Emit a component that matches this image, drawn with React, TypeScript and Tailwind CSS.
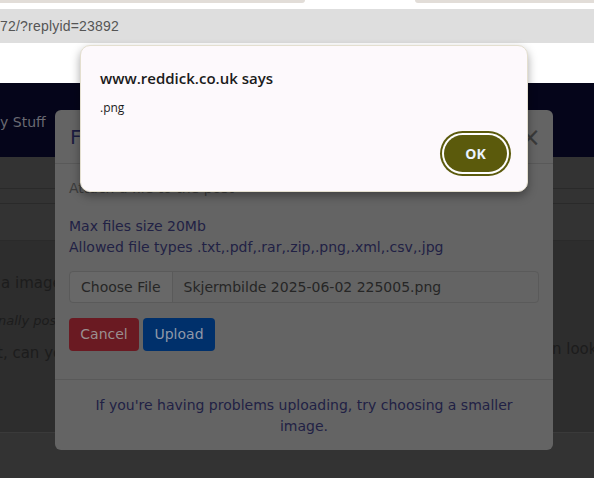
import React from "react";

export default function App() {
  return (
    <div className="relative w-[594px] h-[478px] overflow-hidden bg-white flex flex-col" style={{ fontFamily: '"DejaVu Sans", Verdana, sans-serif' }}>
      {/* tab strip */}
      <div className="h-[3px] flex shrink-0">
        <div className="w-[305px] bg-[#e2ddd8] rounded-br-[4px]" />
        <div className="w-[110px] bg-white" />
        <div className="flex-1 bg-[#e2ddd8] rounded-bl-[4px]" />
      </div>
      <div className="h-[6px] bg-white shrink-0" />
      {/* address bar */}
      <div className="h-[34px] bg-[#dedede] shrink-0 flex items-center text-[14px] text-[#555555]" style={{ fontFamily: '"Liberation Sans", Arial, sans-serif' }}>
        <span className="tracking-[0.2px]">72/?replyid=23892</span>
      </div>
      <div className="h-[40px] bg-white shrink-0" />
      {/* page (dimmed) */}
      <div className="relative flex-1 bg-[#323232] flex flex-col">
        <div className="h-[74px] bg-[#05051a] shrink-0 flex items-center overflow-hidden">
          <div className="w-[55px] overflow-hidden whitespace-nowrap pt-[3px]">
            <span className="-ml-[12px] text-[14px] text-[#6a6a72] inline-block">My Stuff</span>
          </div>
        </div>
        <div className="h-[32px] bg-[#333333] border-b border-[#2a2a2a] shrink-0" />
        <div className="h-[15px] bg-[#333333] border-b border-[#2a2a2a] shrink-0" />
        <div className="h-[37px] bg-[#333333] border-b border-[#2a2a2a] shrink-0" />
        <div className="h-[192px] bg-[#2d2d2d] border-b border-[#3a3a3a] shrink-0 flex text-[#1c1c1c] whitespace-nowrap">
          <div className="w-[55px] overflow-hidden flex flex-col">
            <div className="pt-[31px] text-[15px] pl-[1px]">a image here</div>
            <div className="pt-[16px] text-[13px] italic">
              <span className="inline-block -ml-[2px]">nally posted</span>
            </div>
            <div className="pt-[12px] text-[15px]">
              <span className="inline-block -ml-[3px]">t, can you</span>
            </div>
          </div>
          <div className="w-[498px]" />
          <div className="flex-1 overflow-hidden flex flex-col">
            <div className="pt-[97px] text-[15px]">
              <span className="inline-block -ml-[1px]">n look</span>
            </div>
          </div>
        </div>
        <div className="flex-1 bg-[#333333]" />

        {/* bootstrap modal (dimmed) */}
        <div className="absolute left-[55px] top-[27px] w-[498px] rounded-[6px] bg-[#646464] flex flex-col">
          <div className="h-[54px] border-b border-[#595959] flex items-center justify-between pl-[15px] pr-[12px]">
            <span className="text-[20px] text-[#1c1c40]">File Upload</span>
            <span className="text-[26px] text-[#3a3a3a] leading-none">×</span>
          </div>
          <div className="px-[14px] pt-[14px] pb-[28px] flex flex-col text-[14px] leading-[21px] text-[#212144]">
            <div className="text-[14px] text-[#3c3c3c]">Attach a file to the post</div>
            <div className="mt-[17px]">Max files size 20Mb</div>
            <div>Allowed file types .txt,.pdf,.rar,.zip,.png,.xml,.csv,.jpg</div>
            <div className="mt-[13px] h-[32px] border border-[#5a5a5a] rounded-[4px] flex items-center text-[#262626]">
              <div className="h-full flex items-center px-[11px] bg-[#686868] border-r border-[#5a5a5a] rounded-l-[4px]">Choose File</div>
              <div className="pl-[11px]">Skjermbilde 2025-06-02 225005.png</div>
            </div>
            <div className="mt-[15px] flex gap-[4px]">
              <button className="h-[33px] w-[70px] rounded-[4px] bg-[#6a1a22] text-[#9a8f90] text-[14px]">Cancel</button>
              <button className="h-[33px] w-[72px] rounded-[4px] bg-[#00306b] text-[#8f98a8] text-[14px]">Upload</button>
            </div>
          </div>
          <div className="border-t border-[#595959] px-[20px] pt-[15px] pb-[13px] text-center text-[14px] leading-[21px] text-[#212144]">
            If you're having problems uploading, try choosing a smaller image.
          </div>
        </div>
      </div>

      {/* chrome alert */}
      <div className="absolute left-[80px] top-[45px] w-[448px] h-[147px] bg-[#fdf9fc] border border-[#e4dfcf] rounded-[10px] shadow-[0_4px_10px_rgba(0,0,0,0.35)] flex flex-col px-[19px]" style={{ fontFamily: '"Open Sans", "Noto Sans", sans-serif' }}>
        <div className="mt-[21px] text-[15px] font-semibold text-[#1b1b1b] leading-[22px]">www.reddick.co.uk says</div>
        <div className="mt-[11px] text-[12px] text-[#1b1b1b] leading-[16px]">.png</div>
        <div className="flex justify-end mt-[19px] pr-[1px]">
          <button className="w-[63px] h-[37px] rounded-full bg-[#5b5a0c] text-[#eaf3ff] text-[14px] font-bold shadow-[0_0_0_2px_#ffffff,0_0_0_4px_#5b5a0c]">OK</button>
        </div>
      </div>
    </div>
  );
}
